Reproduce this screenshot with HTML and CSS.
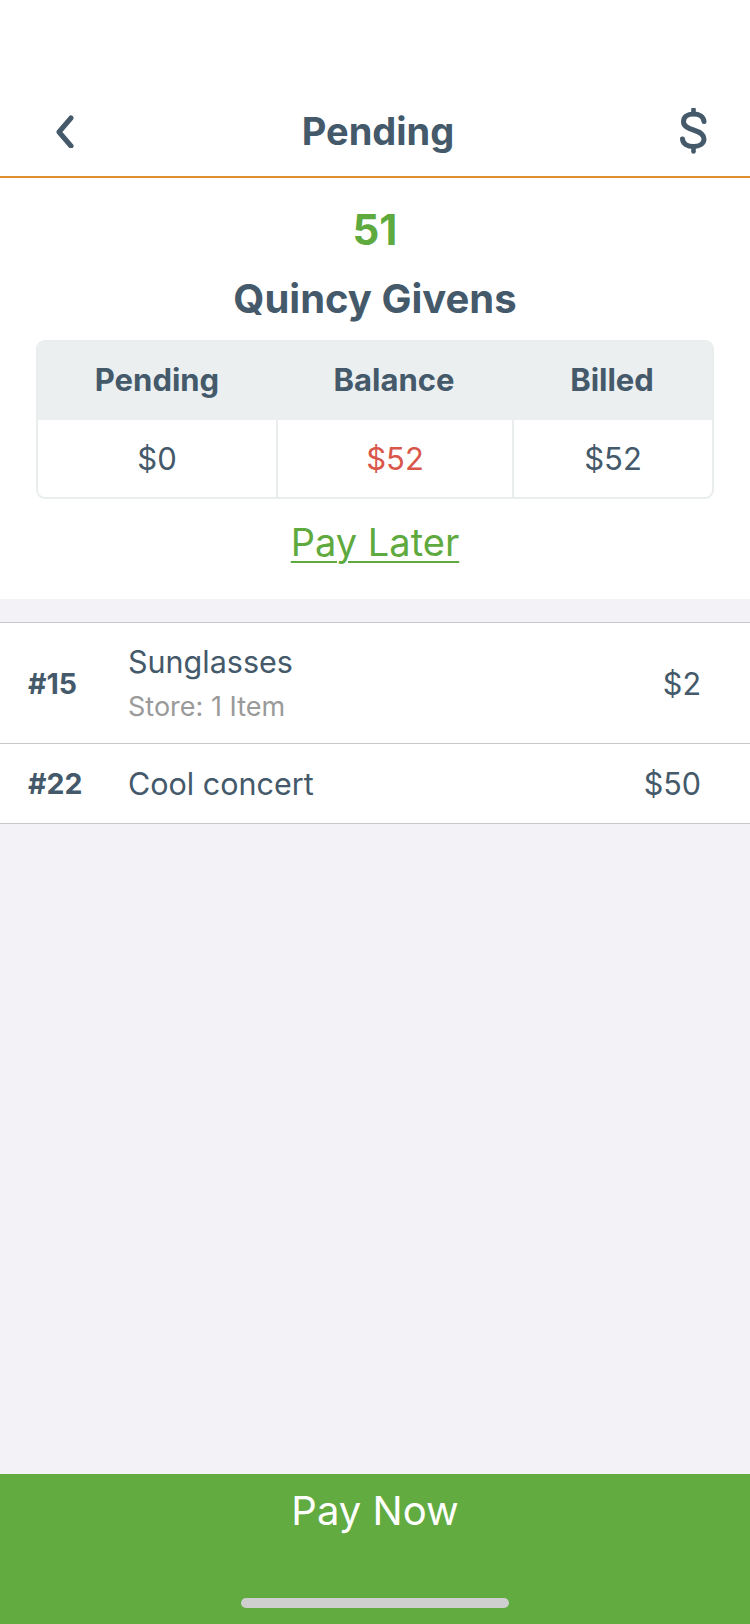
FILE: index.html
```html
<!DOCTYPE html>
<html>
<head>
<meta charset="utf-8">
<link rel="stylesheet" href="styles.css">
</head>
<body>
<div class="screen">
  <header class="header">
    <svg class="icon back" width="40" height="40" viewBox="0 0 40 40"><polyline points="27,10 15,24 27,38" fill="none" stroke="#44596a" stroke-width="5" stroke-linecap="round" stroke-linejoin="round"/></svg>
    <div class="title">Pending</div>
    <svg class="icon dollar" width="40" height="46" viewBox="0 0 40 46"><path d="M32 13.5 C31.5 8.5 27 6 21.5 6 C15.5 6 11.5 9 11.5 13.8 C11.5 18.5 16 20.3 21.5 22 C27.5 23.8 32 26 32 31 C32 35.8 27.5 38.5 21.5 38.5 C15.5 38.5 11 36 10.5 31" fill="none" stroke="#44596a" stroke-width="5" stroke-linecap="round"/><line x1="21.5" y1="1.5" x2="21.5" y2="6" stroke="#44596a" stroke-width="4.6" stroke-linecap="round"/><line x1="21.5" y1="38.5" x2="21.5" y2="43.5" stroke="#44596a" stroke-width="4.6" stroke-linecap="round"/></svg>
  </header>
  <section class="summary">
    <div class="num">51</div>
    <div class="name">Quincy Givens</div>
    <div class="table">
      <div class="th">Pending</div>
      <div class="th">Balance</div>
      <div class="th">Billed</div>
      <div class="td">$0</div>
      <div class="td red">$52</div>
      <div class="td">$52</div>
    </div>
    <div class="later"><a class="later-link">Pay Later</a></div>
  </section>
  <div class="list">
    <div class="row tall">
      <div class="id">#15</div>
      <div class="desc"><div class="item">Sunglasses</div><div class="sub">Store: 1 Item</div></div>
      <div class="price">$2</div>
    </div>
    <div class="row">
      <div class="id">#22</div>
      <div class="desc"><div class="item">Cool concert</div></div>
      <div class="price">$50</div>
    </div>
  </div>
  <div class="spacer"></div>
  <footer class="pay">
    <div class="pay-text">Pay Now</div>
    <div class="home"></div>
  </footer>
</div>
</body>
</html>
```
FILE: styles.css
```css
html, body {
  margin: 0;
  padding: 0;
}
body {
  background: #f2f2f7;
  font-family: Inter, "Noto Sans", sans-serif;
  color: #44596a;
}
.screen {
  width: 750px;
  height: 1624px;
  display: flex;
  flex-direction: column;
  background: #f2f2f7;
}
.header {
  height: 178px;
  box-sizing: border-box;
  padding: 86px 38px 0 44px;
  display: flex;
  align-items: flex-start;
  justify-content: space-between;
  background: #fff;
  border-bottom: 2px solid #e08f2e;
}
.icon { display: block; }
.back { margin-top: 22px; }
.dollar { margin-top: 22px; }
.title {
  font-size: 38px;
  font-weight: 700;
  line-height: 90px;
}
.summary {
  background: #fff;
  padding: 22px 36px 24px;
  display: flex;
  flex-direction: column;
  align-items: center;
}
.num {
  color: #5faa3f;
  font-weight: 700;
  font-size: 42px;
  line-height: 60px;
}
.name {
  font-weight: 700;
  font-size: 40px;
  line-height: 56px;
  margin-top: 11px;
}
.table {
  margin-top: 13px;
  align-self: stretch;
  display: grid;
  grid-template-columns: 238px 236px 1fr;
  border: 2px solid #e9eded;
  border-radius: 9px;
  overflow: hidden;
}
.th {
  background: #ebeff0;
  height: 78px;
  display: flex;
  align-items: center;
  justify-content: center;
  font-weight: 700;
  font-size: 31px;
  padding-bottom: 3px;
  box-sizing: border-box;
}
.td {
  height: 77px;
  display: flex;
  align-items: center;
  justify-content: center;
  font-size: 31px;
  border-left: 2px solid #e9eded;
}
.td:nth-child(4) { border-left: none; }
.red { color: #d9574a; }
.later {
  margin-top: 18px;
  line-height: 50px;
}
.later-link {
  color: #5faa3f;
  font-size: 38px;
  text-decoration: underline;
  text-decoration-thickness: 2px;
  text-underline-offset: 5px;
}
.list {
  margin-top: 23px;
  background: #fff;
  border-top: 1px solid #c9c9cd;
}
.row {
  height: 79px;
  display: flex;
  align-items: center;
  padding: 0 49px 0 28px;
  border-bottom: 1px solid #c9c9cd;
}
.row.tall { height: 120px; }
.id {
  width: 100px;
  font-weight: 700;
  font-size: 28.5px;
}
.desc { flex: 1; }
.item {
  font-size: 30.5px;
  line-height: 40px;
}
.sub {
  font-size: 27px;
  color: #9a9a9a;
  line-height: 34px;
  margin-top: 8.5px;
}
.price { font-size: 30.5px; }
.spacer { flex: 1; }
.pay {
  height: 150px;
  background: #61ab41;
  display: flex;
  flex-direction: column;
  align-items: center;
}
.pay-text {
  color: #fff;
  font-size: 40px;
  line-height: 50px;
  margin-top: 12px;
}
.home {
  margin-top: 62px;
  width: 268px;
  height: 10px;
  border-radius: 5px;
  background: #cfcfcf;
}
```
